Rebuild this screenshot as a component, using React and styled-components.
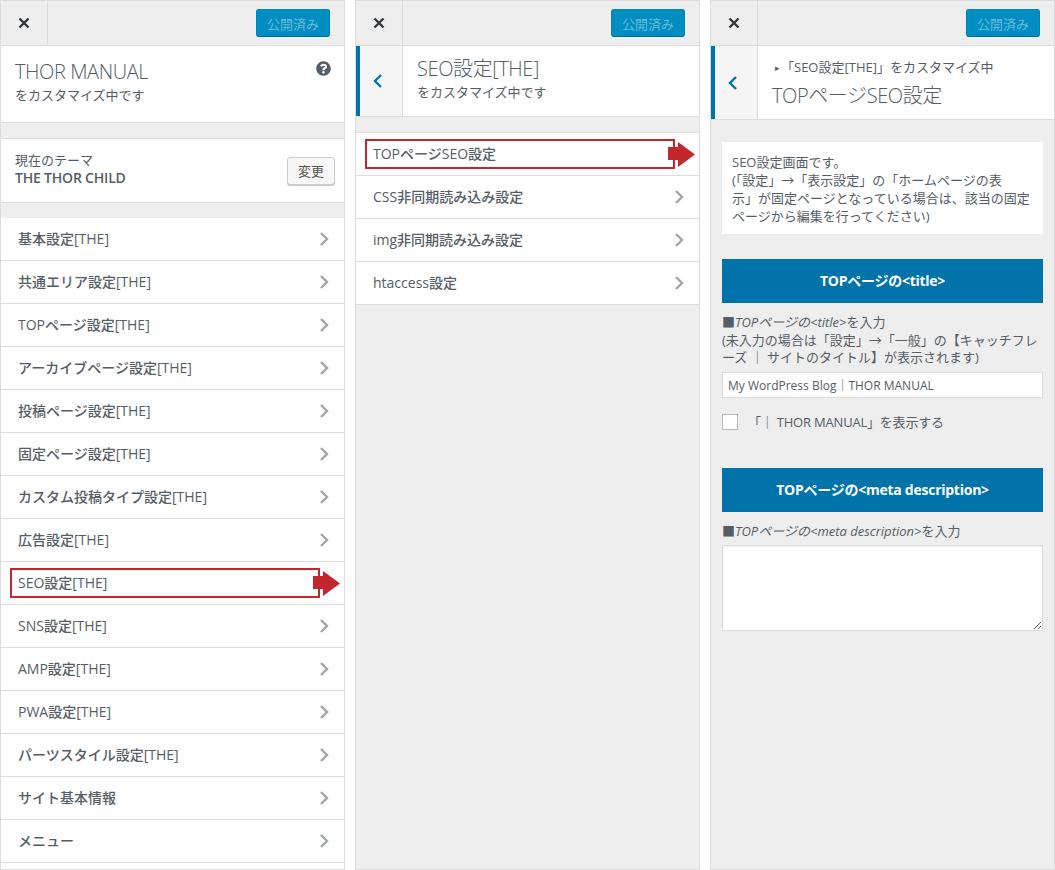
import styled, { createGlobalStyle } from "styled-components";
import { FaQuestionCircle } from "react-icons/fa";

const GlobalStyle = createGlobalStyle`
  html, body {
    margin: 0;
    padding: 0;
    background: #fff;
  }
  * {
    box-sizing: border-box;
  }
`;

const FONT = `"Open Sans", "Noto Sans CJK JP", sans-serif`;

const MAIN_ITEMS = [
  "基本設定[THE]",
  "共通エリア設定[THE]",
  "TOPページ設定[THE]",
  "アーカイブページ設定[THE]",
  "投稿ページ設定[THE]",
  "固定ページ設定[THE]",
  "カスタム投稿タイプ設定[THE]",
  "広告設定[THE]",
  "SEO設定[THE]",
  "SNS設定[THE]",
  "AMP設定[THE]",
  "PWA設定[THE]",
  "パーツスタイル設定[THE]",
  "サイト基本情報",
  "メニュー",
];

const SEO_ITEMS = [
  "TOPページSEO設定",
  "CSS非同期読み込み設定",
  "img非同期読み込み設定",
  "htaccess設定",
];

const CloseIcon = () => (
  <svg width="12" height="12" viewBox="0 0 12 12">
    <path d="M1.5 1.5 L10.5 10.5 M10.5 1.5 L1.5 10.5" stroke="#32373c" strokeWidth="2.4" fill="none" />
  </svg>
);

const Chevron = () => (
  <ChevronSvg width="10" height="14" viewBox="0 0 10 14">
    <path d="M2 1 L8 7 L2 13" stroke="#a0a5aa" strokeWidth="2.4" fill="none" />
  </ChevronSvg>
);

const BackIcon = () => (
  <svg width="10" height="14" viewBox="0 0 10 14">
    <path d="M8 1 L2 7 L8 13" stroke="#0073aa" strokeWidth="2.4" fill="none" />
  </svg>
);

const TopBar = () => (
  <Header>
    <CloseBox>
      <CloseIcon />
    </CloseBox>
    <PublishButton>公開済み</PublishButton>
  </Header>
);

const MenuRow = ({ label, marked }) => (
  <Row>
    <RowLabel>{label}</RowLabel>
    <Chevron />
    {marked && (
      <>
        <MarkBox />
        <MarkArrow width="27" height="25" viewBox="0 0 27 25">
          <path d="M0 5 H10 V0 L27 12.5 L10 25 V18 H0 Z" fill="#c1272d" />
        </MarkArrow>
      </>
    )}
  </Row>
);

const App = () => {
  return (
    <Page>
      <GlobalStyle />

      <Panel>
        <TopBar />
        <InfoSection>
          <InfoTop>
            <Title>THOR MANUAL</Title>
            <HelpIcon />
          </InfoTop>
          <Sub>をカスタマイズ中です</Sub>
        </InfoSection>
        <ThemeSection>
          <div>
            <ThemeLabel>現在のテーマ</ThemeLabel>
            <ThemeName>THE THOR CHILD</ThemeName>
          </div>
          <ChangeButton>変更</ChangeButton>
        </ThemeSection>
        <List>
          {MAIN_ITEMS.map((item) => (
            <MenuRow key={item} label={item} marked={item === "SEO設定[THE]"} />
          ))}
          <ListEnd />
        </List>
      </Panel>

      <Panel>
        <TopBar />
        <SubHeader $height={71}>
          <BackBox>
            <BackIcon />
          </BackBox>
          <SubHeaderText $top={10}>
            <Title>SEO設定[THE]</Title>
            <Sub>をカスタマイズ中です</Sub>
          </SubHeaderText>
        </SubHeader>
        <List $bordered>
          {SEO_ITEMS.map((item, i) => (
            <MenuRow key={item} label={item} marked={i === 0} />
          ))}
        </List>
      </Panel>

      <Panel>
        <TopBar />
        <SubHeader $height={74}>
          <BackBox>
            <BackIcon />
          </BackBox>
          <SubHeaderText $top={9}>
            <Crumb>
              <CrumbMark>▸</CrumbMark>「SEO設定[THE]」をカスタマイズ中
            </Crumb>
            <Title>TOPページSEO設定</Title>
          </SubHeaderText>
        </SubHeader>
        <Form>
          <Notice>
            SEO設定画面です。
            <br />
            (「設定」→「表示設定」の「ホームページの表
            <br />
            示」が固定ページとなっている場合は、該当の固定
            <br />
            ページから編集を行ってください)
          </Notice>
          <Heading>TOPページの&lt;title&gt;</Heading>
          <FieldLabel>
            ■<em>TOPページの&lt;title&gt;</em>を入力
            <br />
            (未入力の場合は「設定」→「一般」の【キャッチフレ
            <br />
            ーズ ｜ サイトのタイトル】が表示されます)
          </FieldLabel>
          <TextInput type="text" readOnly value="My WordPress Blog｜THOR MANUAL" />
          <CheckRow>
            <CheckBox type="checkbox" readOnly />
            <span>「｜ THOR MANUAL」を表示する</span>
          </CheckRow>
          <Heading $top={38}>TOPページの&lt;meta description&gt;</Heading>
          <FieldLabel>
            ■<em>TOPページの&lt;meta description&gt;</em>を入力
          </FieldLabel>
          <TextArea />
        </Form>
      </Panel>
    </Page>
  );
};

export default App;

const Page = styled.div`
  display: flex;
  gap: 10px;
  width: 1055px;
  height: 870px;
  overflow: hidden;
  font-family: ${FONT};
  color: #555d66;
`;

const Panel = styled.section`
  display: flex;
  flex-direction: column;
  flex: 0 0 345px;
  height: 870px;
  overflow: hidden;
  background: #eee;
  border: 1px solid #ddd;
`;

const Header = styled.header`
  display: flex;
  flex: 0 0 45px;
  align-items: center;
  justify-content: space-between;
  padding-right: 14px;
  background: #eee;
  border-bottom: 1px solid #ddd;
`;

const CloseBox = styled.div`
  display: flex;
  align-items: center;
  justify-content: center;
  width: 47px;
  height: 44px;
  border-right: 1px solid #ddd;
`;

const PublishButton = styled.button`
  width: 74px;
  height: 28px;
  padding: 0;
  font-family: ${FONT};
  font-size: 13px;
  color: #66bbdb;
  background: #008ec2;
  border: 1px solid #0085b5;
  border-bottom-color: #006d95;
  border-radius: 3px;
`;

const InfoSection = styled.div`
  flex: 0 0 77px;
  padding: 13px 13px 0 14px;
  background: #fff;
  border-bottom: 1px solid #ddd;
`;

const InfoTop = styled.div`
  display: flex;
  align-items: flex-start;
  justify-content: space-between;
`;

const Title = styled.h2`
  margin: 0;
  font-size: 20px;
  font-weight: 300;
  line-height: 26px;
  letter-spacing: -0.4px;
  color: #555d66;
`;

const Sub = styled.div`
  font-size: 13px;
  line-height: 20px;
  color: #555d66;
`;

const HelpIcon = styled(FaQuestionCircle)`
  width: 15px;
  height: 15px;
  margin: 2px 0 0;
  color: #555d66;
`;

const ThemeSection = styled.div`
  display: flex;
  flex: 0 0 65px;
  align-items: center;
  justify-content: space-between;
  margin-top: 15px;
  padding: 0 9px 0 14px;
  background: #fff;
  border-top: 1px solid #ddd;
  border-bottom: 1px solid #ddd;

  > div {
    margin-top: -4px;
  }
`;

const ThemeLabel = styled.div`
  font-size: 13px;
  line-height: 18px;
`;

const ThemeName = styled.div`
  font-size: 14px;
  font-weight: 600;
  line-height: 18px;
  letter-spacing: -0.2px;
`;

const ChangeButton = styled.button`
  width: 48px;
  height: 28px;
  padding: 0;
  font-family: ${FONT};
  font-size: 13px;
  color: #555;
  background: #f7f7f7;
  border: 1px solid #ccc;
  border-radius: 3px;
  box-shadow: 0 1px 0 #ccc;
`;

const List = styled.div`
  display: flex;
  flex: 1;
  flex-direction: column;
  margin-top: 15px;
  ${(p) => p.$bordered && "border-top: 1px solid #ddd;"}
`;

const Row = styled.div`
  position: relative;
  display: flex;
  flex: 0 0 43px;
  align-items: center;
  justify-content: space-between;
  padding: 0 15px 0 17px;
  background: #fff;
  border-bottom: 1px solid #ddd;
`;

const ListEnd = styled.div`
  flex: 1;
  background: #fff;
`;

const RowLabel = styled.span`
  padding-bottom: 2px;
  font-size: 14px;
  font-weight: 500;
  color: #555d66;
`;

const ChevronSvg = styled.svg`
  display: block;
`;

const MarkBox = styled.div`
  position: absolute;
  top: 6px;
  left: 9px;
  width: 310px;
  height: 30px;
  border: 2px solid #c1272d;
`;

const MarkArrow = styled.svg`
  position: absolute;
  top: 9px;
  left: 312px;
`;

const SubHeader = styled.div`
  display: flex;
  flex: 0 0 ${(p) => p.$height}px;
  background: #fff;
  border-bottom: 1px solid #ddd;
`;

const BackBox = styled.div`
  display: flex;
  flex: 0 0 47px;
  align-items: center;
  justify-content: center;
  padding-right: 6px;
  background: #f5f5f5;
  border-left: 4px solid #0073aa;
  border-right: 1px solid #ddd;
`;

const SubHeaderText = styled.div`
  padding: ${(p) => p.$top}px 14px 0;
`;

const Crumb = styled.div`
  margin-bottom: 3px;
  font-size: 13px;
  line-height: 24px;
  color: #555d66;
`;

const CrumbMark = styled.span`
  margin: 0 1px 0 3px;
  font-size: 9px;
  vertical-align: 1px;
`;

const Form = styled.div`
  display: flex;
  flex-direction: column;
  padding: 22px 11px 0;
`;

const Notice = styled.div`
  padding: 11px 10px 9px;
  font-size: 13px;
  line-height: 18px;
  background: #fff;
  white-space: nowrap;
`;

const Heading = styled.div`
  display: flex;
  align-items: center;
  justify-content: center;
  height: 44px;
  margin-top: ${(p) => p.$top ?? 25}px;
  padding-bottom: 2px;
  font-size: 14px;
  font-weight: 700;
  letter-spacing: -0.25px;
  color: #fff;
  background: #0073aa;
`;

const FieldLabel = styled.div`
  margin-top: 11px;
  font-size: 13px;
  line-height: 17.5px;
  color: #555d66;

  em {
    font-style: italic;
  }
`;

const TextInput = styled.input`
  width: 100%;
  height: 26px;
  margin-top: 5.5px;
  padding: 0 5px;
  font-family: ${FONT};
  font-size: 12px;
  color: #555d66;
  background: #fff;
  border: 1px solid #ddd;
  outline: none;
`;

const CheckRow = styled.label`
  display: flex;
  align-items: center;
  gap: 10px;
  margin-top: 16px;
  font-size: 13px;
  line-height: 16px;
  letter-spacing: -0.2px;
`;

const CheckBox = styled.input`
  appearance: none;
  width: 16px;
  height: 16px;
  margin: 0;
  background: #fff;
  border: 1px solid #b4b9be;
`;

const TextArea = styled.textarea`
  display: block;
  width: 100%;
  height: 86px;
  margin-top: 4.5px;
  background: #fff;
  border: 1px solid #ddd;
  box-shadow: inset 0 1px 2px rgba(0, 0, 0, 0.07);
  outline: none;
`;
